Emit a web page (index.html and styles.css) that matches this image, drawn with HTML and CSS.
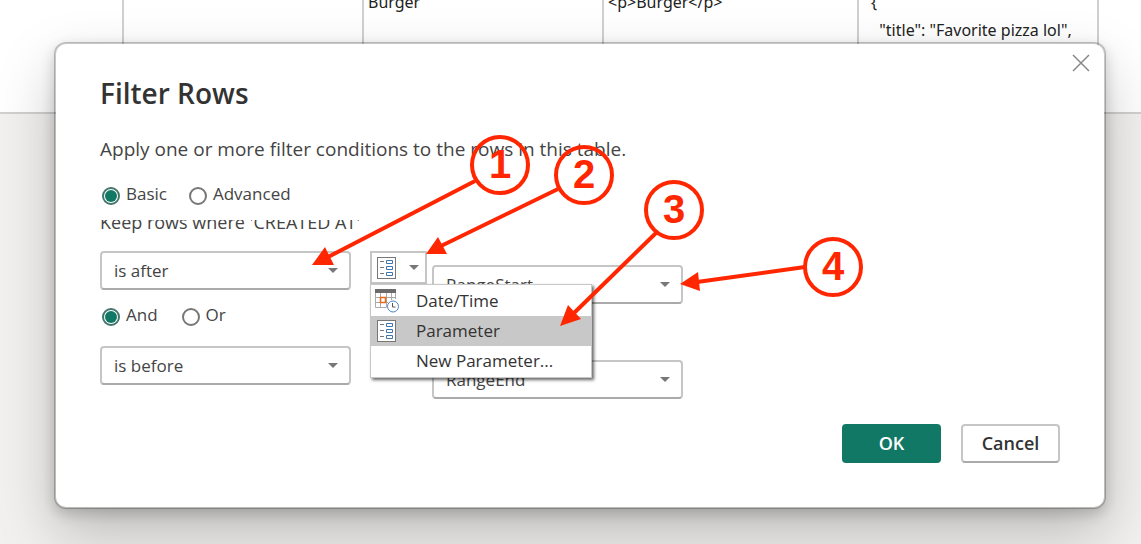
FILE: index.html
```html
<!DOCTYPE html>
<html lang="en">
<head>
    <meta charset="UTF-8">
    <meta name="viewport" content="width=device-width, initial-scale=1.0">
    <title>Filter Rows</title>
    <link rel="stylesheet" href="styles.css">
</head>
<body>
    <div class="preview">
        <table class="preview-table">
            <colgroup>
                <col class="col-index">
                <col class="col-text">
                <col class="col-text">
                <col class="col-html">
                <col class="col-text">
                <col>
            </colgroup>
            <tr>
                <td></td>
                <td></td>
                <td>Burger</td>
                <td>&lt;p&gt;Burger&lt;/p&gt;</td>
                <td class="json">{
  "title": "Favorite pizza lol",</td>
                <td></td>
            </tr>
        </table>
    </div>

    <form class="dialog" role="dialog" aria-labelledby="dialogTitle">
        <button type="button" class="close" aria-label="Close">
            <svg width="18" height="18" viewBox="0 0 18 18"><path d="M1 1L17 17M17 1L1 17"/></svg>
        </button>

        <h1 id="dialogTitle">Filter Rows</h1>
        <p class="description">Apply one or more filter conditions to the rows in this table.</p>

        <div class="radios">
            <label><input type="radio" name="mode" checked>Basic</label>
            <label><input type="radio" name="mode">Advanced</label>
        </div>

        <div class="conditions">
            <p class="keep">Keep rows where 'CREATED AT'</p>

            <div class="columns">
                <div class="operators">
                    <div class="select">
                        <select aria-label="First operator"><option>is after</option></select>
                    </div>
                    <div class="radios join">
                        <label><input type="radio" name="join" checked>And</label>
                        <label><input type="radio" name="join">Or</label>
                    </div>
                    <div class="select">
                        <select aria-label="Second operator"><option>is before</option></select>
                    </div>
                </div>

                <div class="types">
                    <button type="button" class="type-button" aria-label="Value type" aria-expanded="true">
                        <svg class="icon" width="20" height="22" viewBox="0 0 20 22">
                            <rect class="sheet" x="1.5" y=".5" width="18" height="21"/>
                            <path class="dash" d="M4 4.5h4M4 10.5h4M4 16.5h4"/>
                            <path class="box" d="M10.5 3.5h6v3h-6zM10.5 9.5h6v3h-6zM10.5 15.5h6v3h-6z"/>
                        </svg>
                    </button>
                    <div class="menu" role="menu">
                        <button type="button" role="menuitem">
                            <svg class="icon-date" width="26" height="24" viewBox="0 0 26 24">
                                <path class="grid" d="M1.5 4v14.5h11M6.5 4v14M12.5 4v14M17.5 4v7M21.5 4v6M1 8.5h20M1 13.5h13"/>
                                <path class="head" d="M1 0h21v4H1z"/>
                                <rect class="day" x="6.5" y="8.5" width="5" height="5"/>
                                <circle class="clock" cx="19" cy="17.5" r="5.5"/>
                                <path class="hands" d="M18.5 14v4h3"/>
                            </svg>
                            <span>Date/Time</span>
                        </button>
                        <button type="button" role="menuitem" class="active">
                            <svg class="icon" width="20" height="22" viewBox="0 0 20 22">
                                <rect class="sheet" x="1.5" y=".5" width="18" height="21"/>
                                <path class="dash" d="M4 4.5h4M4 10.5h4M4 16.5h4"/>
                                <path class="box" d="M10.5 3.5h6v3h-6zM10.5 9.5h6v3h-6zM10.5 15.5h6v3h-6z"/>
                            </svg>
                            <span>Parameter</span>
                        </button>
                        <button type="button" role="menuitem"><span>New Parameter...</span></button>
                    </div>
                </div>

                <div class="values">
                    <div class="select">
                        <select aria-label="First value"><option>RangeStart</option></select>
                    </div>
                    <div class="select">
                        <select aria-label="Second value"><option>RangeEnd</option></select>
                    </div>
                </div>
            </div>
        </div>

        <div class="actions">
            <button type="submit" class="primary">OK</button>
            <button type="button">Cancel</button>
        </div>
    </form>

    <!-- numbered callouts over the dialog -->
    <svg class="callouts" width="880" height="340" viewBox="0 0 880 340">
        <path class="line" d="M475 181L328 257M558 189L441 246M657 232L573 314M805 267L697 282"/>
        <path class="tip" d="M312 265L325 247L334 265zM426 254L438 237L447 254zM560 326L568 305L581 319zM680 284L698 272L700 291z"/>
        <circle cx="500" cy="165" r="28"/>
        <circle cx="584" cy="175" r="28"/>
        <circle cx="674" cy="210" r="28"/>
        <circle cx="833" cy="267" r="28"/>
        <text x="500" y="178">1</text>
        <text x="584" y="188">2</text>
        <text x="674" y="223">3</text>
        <text x="833" y="280">4</text>
    </svg>
</body>
</html>
```
FILE: styles.css
```css
* {
    margin: 0;
    padding: 0;
    box-sizing: border-box;
}
body {
    position: relative;
    min-height: 100vh;
    overflow: hidden;
    background: #f2f1f0;
    color: #444;
    font-family: "Segoe UI", "Open Sans", "Noto Sans", sans-serif;
    font-size: 17px;
    line-height: 24px;
}
button, select {
    font: inherit;
    color: inherit;
}

/* data preview behind the dialog */
.preview {
    height: 114px;
    overflow: hidden;
    background: #fff;
    border-bottom: 2px solid #d0d0d0;
}
.preview-table {
    width: 100%;
    height: 140px;
    margin-top: -12px;
    table-layout: fixed;
    border-collapse: separate;
    border-spacing: 0;
    color: #222;
    font-family: "Noto Sans", sans-serif;
    font-size: 16px;
    line-height: 28px;
}
.preview-table td {
    padding-left: 4px;
    border-right: 2px solid #d0d0d0;
    vertical-align: top;
}
.preview-table td:last-child {
    border-right: none;
}
.preview-table .json {
    padding-left: 12px;
    white-space: pre;
}
.col-index {
    width: 124px;
}
.col-text {
    width: 240px;
}
.col-html {
    width: 255px;
}

.dialog {
    position: absolute;
    top: 42px;
    left: 54px;
    right: 35px;
    padding: 30px 44px 44px;
    background: #fff;
    background-clip: padding-box;
    border: 2px solid rgba(0, 0, 0, 0.22);
    border-radius: 12px;
    box-shadow: 0 26px 58px rgba(0, 0, 0, 0.22), 0 5px 14px rgba(0, 0, 0, 0.18);
}
.close {
    position: absolute;
    top: 6px;
    right: 10px;
    width: 26px;
    height: 26px;
    background: none;
    border: none;
}
.close svg {
    display: block;
    margin: 4px;
    fill: none;
    stroke: #888;
    stroke-width: 1.5;
}
h1 {
    color: #333;
    font-size: 28px;
    font-weight: 600;
    line-height: 38px;
}
.description {
    margin-top: 25px;
    font-size: 19px;
}

.radios {
    display: flex;
    gap: 22px;
    margin-top: 21px;
    padding-left: 2px;
}
.radios label {
    display: flex;
    gap: 6px;
}
.radios input {
    appearance: none;
    width: 18px;
    height: 18px;
    margin-top: 5px;
    border: 2px solid #777;
    border-radius: 50%;
    background: #fff;
}
.radios input:checked {
    border-color: #44756b;
    background: #117865;
    background-clip: content-box;
    padding: 1px;
}

.conditions {
    margin-top: 14px;
}
.keep {
    height: 16px;
    overflow: hidden;
    font-size: 18px;
    line-height: 4px;
}
.columns {
    display: flex;
    margin-top: 15px;
}
.operators, .values {
    width: 251px;
}
.join {
    gap: 24px;
    margin: 13px 0 19px;
}
.select {
    position: relative;
}
.select select {
    display: block;
    appearance: none;
    width: 100%;
    height: 39px;
    padding: 0 30px 0 12px;
    background: #fff;
    border: 2px solid #c6c6c6;
    border-bottom-color: #aaa;
    border-radius: 4px;
}
.select::after, .type-button::after {
    content: "";
    position: absolute;
    top: 17px;
    right: 13px;
    border: 5px solid transparent;
    border-top-color: #777;
    border-bottom: none;
    pointer-events: none;
}
.types {
    position: relative;
    width: 57px;
    margin: 0 5px 0 19px;
}
.type-button {
    position: relative;
    display: block;
    width: 57px;
    height: 33px;
    padding-left: 4px;
    background: #fff;
    border: 2px solid #c6c6c6;
    text-align: left;
}
.type-button::after {
    top: 12px;
    right: 6px;
}
.values {
    padding-top: 14px;
}
.values .select + .select {
    margin-top: 56px;
}

.menu {
    position: absolute;
    top: 33px;
    left: 0;
    z-index: 1;
    width: 222px;
    padding: 1px 0;
    background: #fff;
    border: 1px solid #c8c8c8;
    box-shadow: 2px 2px 3px rgba(0, 0, 0, 0.6);
}
.menu button {
    display: grid;
    grid-template-columns: 45px 1fr;
    align-items: center;
    width: 100%;
    height: 30px;
    background: none;
    border: none;
    color: #333;
    text-align: left;
}
.menu span {
    grid-column: 2;
}
.menu .active {
    background: #c8c8c8;
}
.icon, .icon-date {
    display: block;
    fill: none;
}
.menu .icon {
    margin-left: 5px;
}
.icon-date {
    margin-left: 3px;
}
.sheet {
    fill: #fff;
    stroke: #777;
}
.dash {
    stroke: #777;
}
.box {
    stroke: #3b76b0;
}
.grid {
    stroke: #aaa;
}
.head {
    fill: #6b6b6b;
}
.day {
    fill: #fff;
    stroke: #e06c1f;
    stroke-width: 1.5;
}
.clock {
    fill: #fff;
    stroke: #4a86c5;
}
.hands {
    stroke: #555;
}

.actions {
    display: flex;
    justify-content: flex-end;
    gap: 20px;
    margin-top: 25px;
}
.actions button {
    width: 99px;
    height: 39px;
    padding-bottom: 2px;
    background: #fff;
    border: 2px solid #c6c6c6;
    border-bottom-color: #aaa;
    border-radius: 4px;
    color: #333;
    font-size: 18px;
    font-weight: 600;
}
.actions .primary {
    background: #117865;
    border-color: #117865;
    color: #fff;
}

.callouts {
    position: absolute;
    top: 0;
    left: 0;
    z-index: 2;
    pointer-events: none;
}
.callouts circle, .line {
    fill: none;
    stroke: #ff2600;
    stroke-width: 4;
}
.tip, .callouts text {
    fill: #ff2600;
}
.callouts text {
    font-family: "Liberation Sans", Arial, sans-serif;
    font-size: 40px;
    font-weight: bold;
    text-anchor: middle;
}
```
